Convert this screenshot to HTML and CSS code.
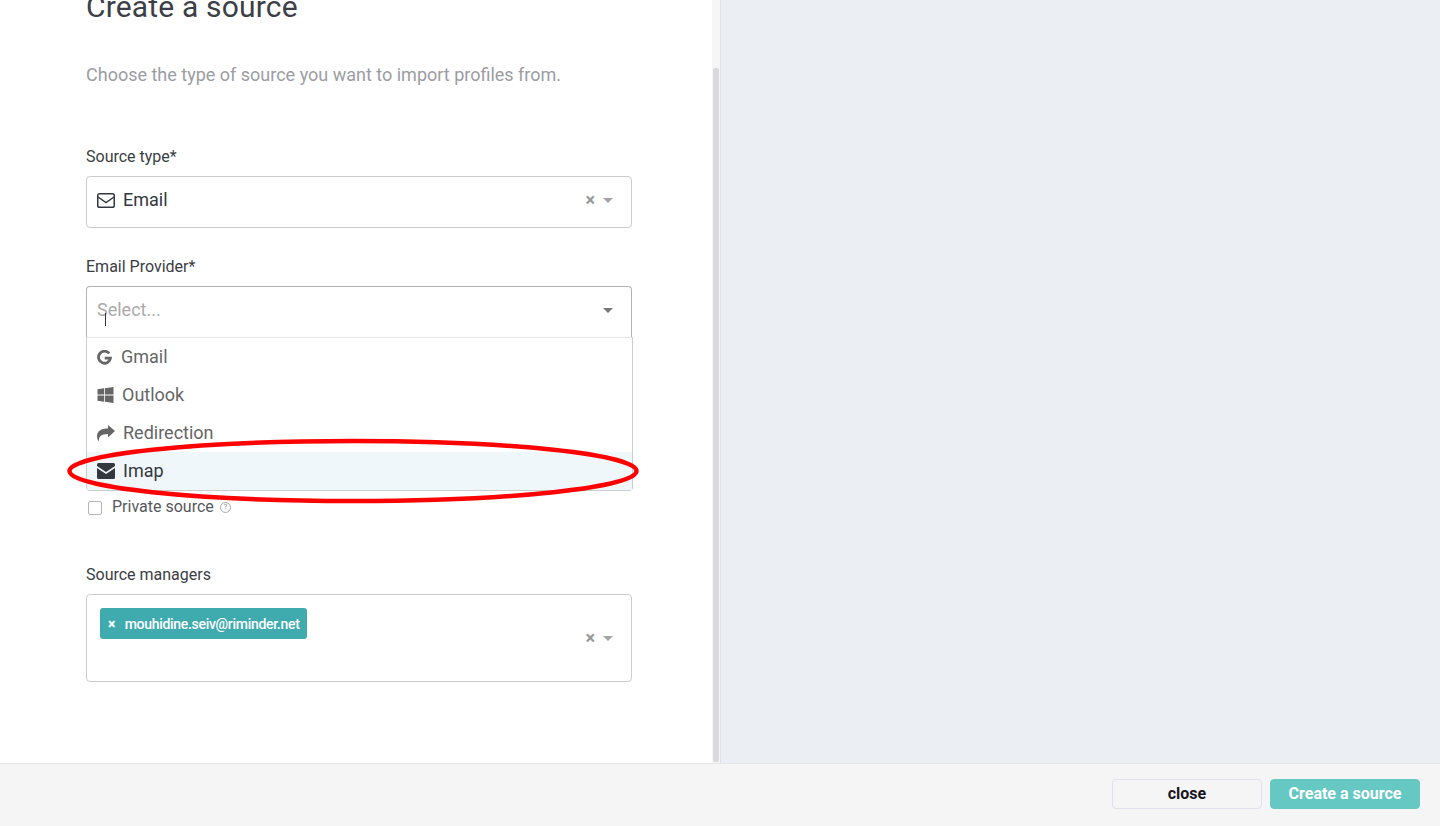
FILE: index.html
```html
<!DOCTYPE html>
<html lang="en">
<head>
<meta charset="utf-8">
<title>Create a source</title>
<link rel="stylesheet" href="styles.css">
</head>
<body>
<div class="app">
  <div class="main">
    <div class="panel">
      <div class="content">
        <h1 class="title">Create a source</h1>
        <p class="subtitle">Choose the type of source you want to import profiles from.</p>

        <div class="field field-type">
          <label class="label">Source type*</label>
          <div class="select">
            <svg class="icon" width="18" height="15" viewBox="0 0 18 15"><rect x="0.75" y="0.75" width="16.5" height="13.5" rx="1.8" fill="none" stroke="#333740" stroke-width="1.5"/><path d="M1 4L9 9.5L17 4" fill="none" stroke="#333740" stroke-width="1.5"/></svg>
            <span class="value">Email</span>
            <span class="clear">×</span>
            <span class="caret"></span>
          </div>
        </div>

        <div class="field field-provider">
          <label class="label">Email Provider*</label>
          <div class="select select-open">
            <span class="placeholder">Select...</span>
            <span class="text-cursor"></span>
            <span class="caret caret-dark"></span>
          </div>
          <div class="menu">
            <div class="option">
              <svg class="icon-g" width="15" height="15" viewBox="0 0 16 16"><path d="M13 3.6A6.4 6.4 0 1 0 14.4 8.6H8.2" fill="none" stroke="#666" stroke-width="3"/></svg>
              <span class="option-text">Gmail</span>
            </div>
            <div class="option">
              <svg class="icon-win" width="17" height="16" viewBox="0 0 16 16"><path fill="#666" d="M0 2.2L6.5 1.3V7.5H0zM7.3 1.2L16 0V7.5H7.3zM0 8.4H6.5V14.7L0 13.8zM7.3 8.4H16V16L7.3 14.8z"/></svg>
              <span class="option-text">Outlook</span>
            </div>
            <div class="option">
              <svg class="icon" width="18" height="17" viewBox="0 0 18 17"><path fill="#666" d="M18 6L11 0V3.5C4 3.5 0 6 0 11.5C0 13.5 1 15.5 2 16.5C1.5 12 3.5 9 11 9V12.5Z"/></svg>
              <span class="option-text">Redirection</span>
            </div>
            <div class="option option-active">
              <svg class="icon" width="18" height="16" viewBox="0 0 18 16"><path fill="#333740" d="M1.5 0H16.5A1.5 1.5 0 0 1 18 1.5V3L9 9L0 3V1.5A1.5 1.5 0 0 1 1.5 0ZM0 5L9 11L18 5V14.5A1.5 1.5 0 0 1 16.5 16H1.5A1.5 1.5 0 0 1 0 14.5Z"/></svg>
              <span class="option-text">Imap</span>
            </div>
          </div>
        </div>

        <div class="private">
          <span class="checkbox"></span>
          <span class="private-label">Private source</span>
          <span class="help">?</span>
        </div>

        <div class="field field-managers">
          <label class="label">Source managers</label>
          <div class="select select-multi">
            <span class="tag"><span class="tag-x">×</span>mouhidine.seiv@riminder.net</span>
            <span class="multi-controls">
              <span class="clear">×</span>
              <span class="caret"></span>
            </span>
          </div>
        </div>
      </div>
      <div class="track"><div class="thumb"></div></div>
    </div>
    <div class="side"></div>
  </div>
  <div class="footer">
    <button class="btn btn-close">close</button>
    <button class="btn btn-create">Create a source</button>
  </div>
  <svg class="highlight" width="590" height="70" viewBox="0 0 590 70"><ellipse cx="295" cy="35" rx="283.5" ry="30" fill="none" stroke="#ff0000" stroke-width="4.5"/></svg>
</div>
</body>
</html>
```
FILE: styles.css
```css
* { box-sizing: border-box; }
html, body { margin: 0; padding: 0; height: 100%; overflow: hidden; background: #fff; }
body { font-family: Roboto, "Liberation Sans", sans-serif; color: #3a3d44; }

.app { position: relative; width: 1440px; height: 826px; display: flex; flex-direction: column; overflow: hidden; }
.main { height: 763px; display: flex; }
.panel { width: 720px; display: flex; background: #fff; }
.content { width: 712px; padding-left: 86px; padding-right: 80px; overflow: hidden; }
.track { width: 8px; background: #f6f6f6; padding: 68px 1px 1px; }
.thumb { height: 100%; background: #d9d9de; border-radius: 2px; }
.side { flex: 1; background: #ebeef3; border-left: 1px solid #dde3ee; }

.title { margin: -11px 0 0; font-size: 30px; line-height: 36px; font-weight: 400; color: #3c3f46; letter-spacing: 0.17px; }
.subtitle { margin: 38px 0 0; font-size: 18px; line-height: 24px; color: #9b9da3; }

.field { position: relative; }
.field-type { margin-top: 59px; }
.field-provider { margin-top: 28px; }
.field-managers { margin-top: 47px; }
.label { display: block; font-size: 16px; line-height: 20px; padding-top: 1px; height: 21px; margin-bottom: 9px; color: #3a3d44; }

.select { position: relative; display: flex; align-items: center; height: 52px; padding: 0 18px 4px 10px; background: #fff; border: 1px solid #cccccc; border-radius: 4px; font-size: 18px; }
.select-open { border-color: #b3b3b3; border-bottom-color: #e6e6e6; border-radius: 4px 4px 0 0; }
.select-multi { height: 88px; align-items: flex-start; padding: 13px 18px 0 13px; }
.icon { flex: none; margin-right: 8px; }
.value { flex: 1; color: #333740; margin-bottom: 2px; }
.placeholder { flex: 1; color: #aaaaaa; margin-bottom: 2px; }
.text-cursor { position: absolute; left: 18px; top: 26px; width: 1px; height: 13px; background: #333; }
.clear { color: #999; font-size: 18px; font-weight: 700; line-height: 18px; margin-right: 8px; }
.caret { width: 0; height: 0; border-style: solid; border-width: 5px 5px 0; border-color: #a5a5a5 transparent transparent; }
.caret-dark { border-top-color: #777; }
.multi-controls { position: absolute; right: 18px; top: 34px; display: flex; align-items: center; }

.menu { position: absolute; left: 0; right: -1px; top: 81px; z-index: 2; background: #fff; border: 1px solid #cccccc; border-top: 1px solid #e6e6e6; border-radius: 0 0 4px 4px; }
.option { display: flex; align-items: center; height: 38px; padding-left: 10px; font-size: 18px; color: #666; }
.option-text { margin-bottom: 2px; }
.option-active { background: #f0f7fb; color: #333740; }
.icon-g { flex: none; margin-right: 9px; }
.icon-win { flex: none; margin-right: 8px; }

.private { display: flex; align-items: center; height: 20px; margin-top: 159px; padding-left: 2px; }
.checkbox { width: 14px; height: 14px; border: 1px solid #b5b5b5; border-radius: 2px; background: #fff; margin-right: 10px; margin-top: 2px; }
.private-label { font-size: 16px; color: #55585e; margin-bottom: 2px; }
.help { display: flex; align-items: center; justify-content: center; width: 11px; height: 11px; margin-left: 6px; border: 1px solid #aaa; border-radius: 50%; font-size: 8px; line-height: 1; color: #999; }

.tag { display: inline-flex; align-items: center; height: 31px; width: 207px; padding-left: 8px; background: #3fabaf; border-radius: 3px; color: #fff; font-size: 14px; letter-spacing: -0.3px; font-weight: 500; white-space: nowrap; }
.tag-x { font-size: 14px; font-weight: 700; margin-right: 9.5px; }

.footer { height: 63px; display: flex; justify-content: flex-end; gap: 8px; padding: 15px 20px 0; background: #f5f5f6; border-top: 1px solid #e6e6e6; }
.btn { width: 150px; height: 30px; border-radius: 4px; font-family: Roboto, "Liberation Sans", sans-serif; font-size: 16px; font-weight: 700; padding: 0 0 2px; }
.btn-close { background: #f5f5f6; border: 1px solid #dfe2ee; color: #16161d; }
.btn-create { background: #65c8c3; border: 1px solid #65c8c3; color: #fff; }

.highlight { position: absolute; left: 58px; top: 436px; z-index: 3; }
```
